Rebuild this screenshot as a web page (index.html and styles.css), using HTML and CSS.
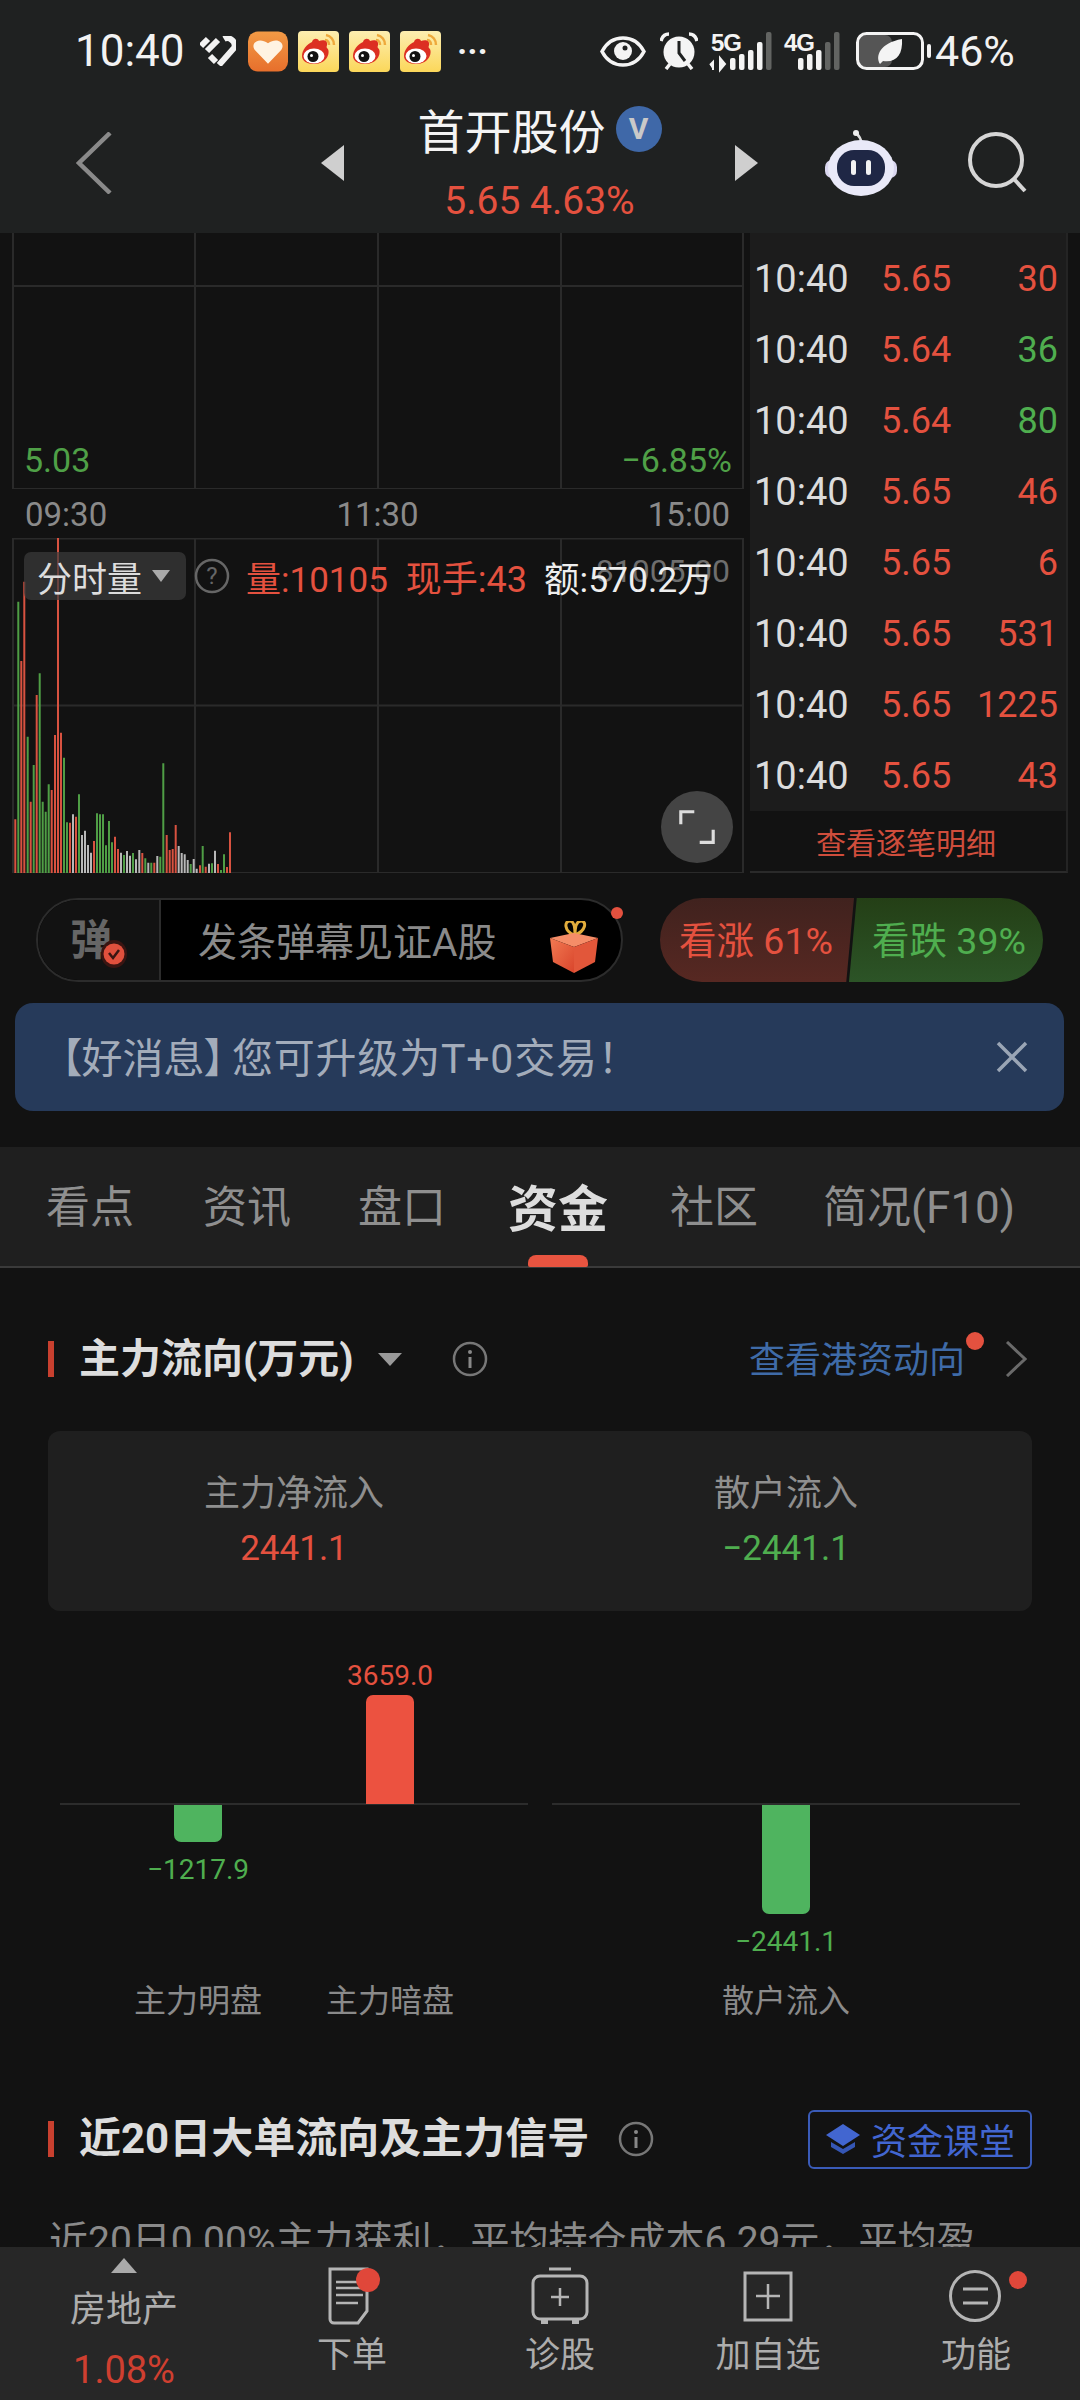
FILE: index.html
```html
<!DOCTYPE html>
<html lang="zh-CN">
<head>
    <meta charset="UTF-8">
    <meta name="viewport" content="width=device-width, initial-scale=1.0">
    <title>首开股份</title>
    <link rel="stylesheet" href="styles.css">
</head>
<body>
    <svg class="defs">
        <defs>
            <linearGradient id="wbBg" x1="0" y1="0" x2="0" y2="1"><stop offset="0" stop-color="#fdeeb0"/><stop offset="1" stop-color="#fbd75a"/></linearGradient>
            <linearGradient id="heartBg" x1="0" y1="0" x2="0" y2="1"><stop offset="0" stop-color="#f29a45"/><stop offset="1" stop-color="#e76f2c"/></linearGradient>
            <linearGradient id="giftBg" x1="0" y1="0" x2="1" y2="1"><stop offset="0" stop-color="#f27a52"/><stop offset="1" stop-color="#d9452c"/></linearGradient>
            <symbol id="weibo" viewBox="0 0 41 41">
                <rect width="41" height="41" rx="4" fill="url(#wbBg)"/>
                <path d="M28 4c5 1 8 5 8 10M27 9c3 0 4 3 4 5" fill="none" stroke="#eea93c" stroke-width="2.500"/>
                <path d="M4 25c0-6 5-12 10-14 1-4 6-4 7-1 5-2 9 0 8 4 0 1-1 2 0 3 4 3 1 16-13 16C9 33 4 30 4 25z" fill="#dc2f22"/>
                <ellipse cx="16" cy="25" rx="10.500" ry="7.500" fill="#fff"/>
                <circle cx="15" cy="25.500" r="5.500" fill="#111"/>
                <circle cx="13.500" cy="24.500" r="1.500" fill="#fff"/>
            </symbol>
            <symbol id="info" viewBox="0 0 36 36">
                <circle cx="18" cy="18" r="16" fill="none" stroke="#777" stroke-width="2.500"/>
                <circle cx="18" cy="11" r="2" fill="#888"/>
                <path d="M18 16v11" stroke="#888" stroke-width="3"/>
            </symbol>
        </defs>
    </svg>

    <div class="top">
        <div class="status">
            <span class="clock">10:40</span>
            <svg class="st-logo" viewBox="0 0 36 30"><path d="M1 10l7-7M7 15L18 4M24 3c5-3 13 3 10 9L19 29M16 26l-6-6" fill="none" stroke="#f2f2f2" stroke-width="6" stroke-linejoin="round"/></svg>
            <svg class="st-app" viewBox="0 0 41 41"><rect width="41" height="41" rx="10" fill="url(#heartBg)"/><path d="M20.500 33L7 19c-5-7 4-14 13.500-7C30 5 39 12 34 19z" fill="#fff3e2"/></svg>
            <svg class="st-wb"><use href="#weibo"/></svg>
            <svg class="st-wb"><use href="#weibo"/></svg>
            <svg class="st-wb"><use href="#weibo"/></svg>
            <span class="st-dots">···</span>
            <span class="st-space"></span>
            <svg class="st-eye" viewBox="0 0 46 31"><path d="M2 15.500C7 6 15 2 23 2s16 4 21 13.500C39 25 31 29 23 29S7 25 2 15.500z" fill="none" stroke="#f4f4f4" stroke-width="3.500"/><circle cx="23" cy="15" r="9" fill="#f4f4f4"/><circle cx="25" cy="12" r="2.500" fill="#1f2121"/></svg>
            <svg class="st-alarm" viewBox="0 0 38 38"><circle cx="19" cy="20" r="15.500" fill="#f4f4f4"/><path d="M19 9v12l6 8" fill="none" stroke="#1f2121" stroke-width="3"/><path d="M1 9c1-4 4-7 8-7M37 9c-1-4-4-7-8-7" fill="none" stroke="#f4f4f4" stroke-width="3.500"/><path d="M6 37l4-5M32 37l-4-5" stroke="#f4f4f4" stroke-width="3.500"/></svg>
            <svg class="st-net" viewBox="705 28 140 46">
                <text x="711" y="51" class="net-txt">5G</text>
                <text x="784" y="51" class="net-txt">4G</text>
                <path d="M713 70v-8l-3 3M720 58v12l5-6z" fill="#f4f4f4" stroke="#f4f4f4" stroke-width="2"/>
                <g fill="#f4f4f4">
                    <rect x="730" y="58" width="5.500" height="12" rx="2"/>
                    <rect x="739" y="54" width="5.500" height="16" rx="2"/>
                    <rect x="748" y="50" width="5.500" height="20" rx="2"/>
                    <rect x="757" y="42" width="5.500" height="28" rx="2"/>
                    <rect x="798" y="58" width="5.500" height="12" rx="2"/>
                    <rect x="807" y="54" width="5.500" height="16" rx="2"/>
                    <rect x="816" y="50" width="5.500" height="20" rx="2"/>
                </g>
                <g fill="#626462">
                    <rect x="766" y="32" width="5.500" height="38" rx="2"/>
                    <rect x="825" y="42" width="5.500" height="28" rx="2"/>
                    <rect x="834" y="32" width="5.500" height="38" rx="2"/>
                </g>
            </svg>
            <svg class="st-batt" viewBox="0 0 76 38"><rect x="3" y="3" width="33" height="32" rx="7" fill="#555"/><rect x="1.500" y="1.500" width="65" height="35" rx="9" fill="none" stroke="#f4f4f4" stroke-width="3"/><path d="M24 32c-5-8 0-21 22-25 1 16-6 24-19 22l-3 3z" fill="#f4f4f4"/><rect x="71" y="12" width="4" height="14" rx="2" fill="#f4f4f4"/></svg>
            <span class="st-pct">46%</span>
        </div>
        <div class="nav">
            <svg class="back" viewBox="0 0 36 62"><path d="M34 1L3 31l31 30" fill="none" stroke="#8a8a8a" stroke-width="4.500"/></svg>
            <span class="tri-left"></span>
            <div class="title-block">
                <div class="title-row"><span class="title">首开股份</span><span class="v-badge">V</span></div>
                <div class="sub">5.65 4.63%</div>
            </div>
            <span class="tri-right"></span>
            <svg class="robot" viewBox="0 0 72 66">
                <path d="M36 12c0-4-2-6-4-8" fill="none" stroke="#ddd" stroke-width="2.500"/>
                <circle cx="31" cy="3" r="3" fill="#eee"/>
                <rect x="0" y="30" width="72" height="18" rx="7" fill="#d9d6ef"/>
                <ellipse cx="36" cy="38" rx="33" ry="28" fill="#e9e9f8"/>
                <rect x="12" y="20" width="48" height="36" rx="17" fill="#1f2745"/>
                <rect x="26" y="30" width="5" height="15" rx="2.500" fill="#f2f2f2"/>
                <rect x="41" y="30" width="5" height="15" rx="2.500" fill="#f2f2f2"/>
            </svg>
            <svg class="search" viewBox="0 0 62 62"><circle cx="29" cy="28" r="26" fill="none" stroke="#d6d6d6" stroke-width="4"/><path d="M46 46l12 13" stroke="#d6d6d6" stroke-width="4"/></svg>
        </div>
    </div>

    <div class="market">
        <div class="chart">
            <div class="pane pane-price">
                <svg class="grid" viewBox="0 233 750 256"><path d="M13 233V489H743V233M195 233V489M378 233V489M561 233V489M13 286H743"/></svg>
                <div class="price-labels"><span>5.03</span><span>−6.85%</span></div>
            </div>
            <div class="time-axis"><span>09:30</span><span>11:30</span><span>15:00</span></div>
            <div class="pane pane-vol">
                <svg class="grid" viewBox="0 538 750 335">
                    <path d="M13 873V538.500H743V873H13M195 538V873M378 538V873M561 538V873M13 705.500H743"/>
                    <path class="v-red" d="M15.300 873V819.300M21.300 873V661M24.300 873V581.700M30.700 873V801.700M36.700 873V695M51.700 873V790M55 873V735M58 873V538M61 873V732.700M70 873V822.700M76 873V816.700M94 873V841M115 873V836.700M118 873V849M142.300 873V853M154.300 873V862.700M166.700 873V835M169.700 873V850M172.700 873V849M175.700 873V825M200 873V865.300M205.700 873V866.700M218 873V864M227 873V867M230 873V832.300"/>
                    <path class="v-green" d="M18.300 873V601.700M27.700 873V736.700M33.700 873V765M39.700 873V673.300M42.700 873V801.700M45.700 873V811.700M48.700 873V784.300M64 873V757.700M67 873V822.300M79 873V794.300M97 873V813.300M100 873V814.300M103 873V814.300M106 873V845.300M109 873V821M112 873V842.300M124 873V855M133 873V853M145.300 873V858.300M151.300 873V862.700M160.300 873V856.700M163.300 873V763.300M190.700 873V864M202.700 873V846M212 873V863.300M221 873V870M224 873V854.300"/>
                    <path class="v-gray" d="M73 873V814.300M82 873V835M85 873V830.700M88 873V845M91 873V852.700M121 873V852.700M127 873V851M130 873V855.700M136 873V859.300M139.300 873V850M148.300 873V862.700M157.300 873V856M178.700 873V846M181.700 873V853M184.700 873V854.300M187.700 873V860M193.700 873V859M196.700 873V868.700M209 873V863.700M215 873V850.700"/>
                </svg>
                <span class="vol-max">81005.00</span>
                <div class="vol-legend">
                    <span class="vol-pill">分时量<i class="caret"></i></span>
                    <svg class="help" viewBox="0 0 36 36"><circle cx="18" cy="18" r="16" fill="none" stroke="#666" stroke-width="2.500"/><text x="18" y="26" text-anchor="middle" class="help-q">?</text></svg>
                    <span class="red vol-a">量:10105</span>
                    <span class="red vol-b">现手:43</span>
                    <span class="vol-c">额:570.2万</span>
                </div>
                <div class="expand">
                    <svg viewBox="0 0 40 40"><path d="M2 17V3h15M38 23v14H23" fill="none" stroke="#ddd" stroke-width="3.500"/></svg>
                </div>
            </div>
        </div>
        <div class="ticks">
            <div class="tick-list">
                <div class="tick"><span>10:40</span><span class="red">5.65</span><span class="red">30</span></div>
                <div class="tick"><span>10:40</span><span class="red">5.64</span><span class="green">36</span></div>
                <div class="tick"><span>10:40</span><span class="red">5.64</span><span class="green">80</span></div>
                <div class="tick"><span>10:40</span><span class="red">5.65</span><span class="red">46</span></div>
                <div class="tick"><span>10:40</span><span class="red">5.65</span><span class="red">6</span></div>
                <div class="tick"><span>10:40</span><span class="red">5.65</span><span class="red">531</span></div>
                <div class="tick"><span>10:40</span><span class="red">5.65</span><span class="red">1225</span></div>
                <div class="tick"><span>10:40</span><span class="red">5.65</span><span class="red">43</span></div>
            </div>
            <div class="tick-more">查看逐笔明细</div>
        </div>
    </div>

    <div class="action-row">
        <div class="danmu">
            <div class="danmu-tag">
                <span class="danmu-char">弹</span>
                <svg class="danmu-check" viewBox="0 0 26 28"><ellipse cx="13" cy="14" rx="13" ry="14" fill="#3a1512"/><circle cx="13" cy="14" r="10.500" fill="#e0503d"/><path d="M8 13l4 5 6-8" fill="none" stroke="#3a1512" stroke-width="2.500"/></svg>
            </div>
            <div class="danmu-input">
                <span class="danmu-text">发条弹幕见证A股</span>
                <svg class="gift" viewBox="0 0 50 52">
                    <path d="M24 14C14 10 14 0 20 0c4 0 5 8 5 14 0-6 1-14 6-14 6 0 5 10-6 14z" fill="none" stroke="#e2ad3c" stroke-width="3"/>
                    <path d="M0 17l24-5 24 5-24 9z" fill="#f58d68"/>
                    <path d="M0 17l24 9v26L3 41z" fill="url(#giftBg)"/>
                    <path d="M48 17l-24 9v26l21-11z" fill="#e2573a"/>
                </svg>
            </div>
            <i class="danmu-dot"></i>
        </div>
        <div class="vote">
            <div class="vote-up">看涨 61%</div>
            <div class="vote-down">看跌 39%</div>
        </div>
    </div>

    <div class="notice">
        <span><span class="notice-tag">【好消息】</span>您可升级为T+0交易！</span>
        <svg class="notice-close" viewBox="0 0 32 32"><path d="M2 2l28 28M30 2L2 30" stroke="#9aa5b5" stroke-width="3.500"/></svg>
    </div>

    <div class="tabs">
        <span class="tab tab-1">看点</span>
        <span class="tab tab-2">资讯</span>
        <span class="tab tab-3">盘口</span>
        <span class="tab tab-4 active">资金</span>
        <span class="tab tab-5">社区</span>
        <span class="tab tab-6">简况(F10)</span>
    </div>

    <div class="content">
        <div class="sec-head">
            <span class="sec-title">主力流向(万元)</span>
            <i class="sec-caret"></i>
            <svg class="sec-info"><use href="#info"/></svg>
            <span class="sec-link">查看港资动向<i class="link-dot"></i></span>
            <svg class="sec-arrow" viewBox="0 0 22 36"><path d="M2 1l18 17L2 35" fill="none" stroke="#6a6a6a" stroke-width="3"/></svg>
        </div>

        <div class="summary">
            <div class="summary-col">
                <div class="summary-label">主力净流入</div>
                <div class="summary-num red">2441.1</div>
            </div>
            <div class="summary-col">
                <div class="summary-label">散户流入</div>
                <div class="summary-num green">−2441.1</div>
            </div>
        </div>

        <div class="flow">
            <div class="flow-group flow-group-a">
                <div class="flow-col">
                    <div class="flow-up"></div>
                    <div class="flow-down">
                        <div class="bar bar-green" style="height:37px"></div>
                        <div class="bar-val green">−1217.9</div>
                    </div>
                    <div class="flow-name">主力明盘</div>
                </div>
                <div class="flow-col">
                    <div class="flow-up">
                        <div class="bar-val red">3659.0</div>
                        <div class="bar bar-red" style="height:109px"></div>
                    </div>
                    <div class="flow-down"></div>
                    <div class="flow-name">主力暗盘</div>
                </div>
            </div>
            <div class="flow-group flow-group-b">
                <div class="flow-col">
                    <div class="flow-up"></div>
                    <div class="flow-down">
                        <div class="bar bar-green" style="height:109px"></div>
                        <div class="bar-val green">−2441.1</div>
                    </div>
                    <div class="flow-name">散户流入</div>
                </div>
            </div>
        </div>

        <div class="sec-head sec-head-2">
            <span class="sec-title sec-title-2">近20日大单流向及主力信号</span>
            <svg class="sec-info sec-info-2"><use href="#info"/></svg>
            <span class="course">
                <svg viewBox="0 0 34 30"><path d="M17 0l17 11-17 11L0 11z" fill="#4266d0"/><path d="M5 18l12 7 12-7v5L17 30 5 23z" fill="#3556b4"/></svg>
                资金课堂
            </span>
        </div>
        <p class="sec-text">近20日0.00%主力获利，平均持仓成本6.29元，平均盈</p>
    </div>

    <div class="bottom">
        <div class="bt-item bt-sector">
            <i class="bt-tri"></i>
            <span class="bt-name">房地产</span>
            <span class="bt-pct">1.08%</span>
        </div>
        <div class="bt-item">
            <span class="bt-icon">
                <svg viewBox="0 0 70 60"><path d="M13 3h37v42l-9 12H17a4 4 0 0 1-4-4z" fill="none" stroke="#b5b5b5" stroke-width="3"/><path d="M19 16h24M19 22h27M19 29h27M19 37h22" stroke="#b5b5b5" stroke-width="2.500"/><circle cx="51" cy="14" r="12" fill="#e0473a"/></svg>
            </span>
            <span>下单</span>
        </div>
        <div class="bt-item">
            <span class="bt-icon">
                <svg viewBox="0 0 70 60"><path d="M24 3h22" stroke="#b5b5b5" stroke-width="3"/><rect x="8" y="10" width="54" height="43" rx="7" fill="none" stroke="#b5b5b5" stroke-width="3"/><path d="M35 22v18M26 31h18" stroke="#b5b5b5" stroke-width="2.500"/><path d="M16 54v4h7v-4M47 54v4h7v-4" fill="#b5b5b5"/></svg>
            </span>
            <span>诊股</span>
        </div>
        <div class="bt-item">
            <span class="bt-icon">
                <svg viewBox="0 0 70 60"><rect x="12" y="7" width="46" height="47" fill="none" stroke="#b5b5b5" stroke-width="3"/><path d="M35 18v25M23 30h24" stroke="#b5b5b5" stroke-width="2.500"/></svg>
            </span>
            <span>加自选</span>
        </div>
        <div class="bt-item">
            <span class="bt-icon">
                <svg viewBox="0 0 70 60"><circle cx="34" cy="30" r="24.500" fill="none" stroke="#b5b5b5" stroke-width="3"/><path d="M22 23h25M22 37h25" stroke="#b5b5b5" stroke-width="3"/></svg>
            </span>
            <span>功能</span>
            <i class="bt-dot"></i>
        </div>
    </div>
</body>
</html>
```

FILE: styles.css
```css
* {
    box-sizing: border-box;
}
body {
    margin: 0;
    width: 1080px;
    height: 2400px;
    overflow: hidden;
    position: relative;
    background-color: #121212;
    color: #ddd;
    font-family: Roboto, "Noto Sans CJK SC", sans-serif;
}
.defs {
    position: absolute;
    width: 0;
    height: 0;
}
.red {
    color: #e4513f;
}
.green {
    color: #4fae4f;
}

/* status bar + stock header */
.top {
    height: 233px;
    background-color: #1f2121;
}
.status {
    height: 80px;
    padding: 22px 0 0 75px;
    display: flex;
    align-items: center;
}
.clock {
    font-size: 44px;
    color: #f2f2f2;
    width: 109px;
}
.st-logo {
    width: 36px;
    height: 30px;
    margin-left: 16px;
}
.st-app {
    width: 40px;
    height: 41px;
    margin-left: 12px;
}
.st-wb {
    width: 41px;
    height: 41px;
    margin-left: 10px;
}
.st-dots {
    font-size: 34px;
    font-weight: 700;
    color: #f2f2f2;
    width: 30px;
    margin-left: 16px;
}
.st-space {
    width: 113px;
}
.st-eye {
    width: 46px;
    height: 31px;
}
.st-alarm {
    width: 38px;
    height: 38px;
    margin-left: 14px;
}
.st-net {
    width: 140px;
    height: 46px;
    margin-left: 7px;
}
.net-txt {
    font-size: 24px;
    font-weight: 700;
    fill: #f4f4f4;
    font-family: "Liberation Sans", sans-serif;
    letter-spacing: -1px;
}
.st-batt {
    width: 76px;
    height: 38px;
    margin-left: 11px;
}
.st-pct {
    font-size: 43px;
    color: #f2f2f2;
    margin-left: 3px;
}
.nav {
    height: 153px;
    padding: 12px 0 0 76px;
    display: flex;
    align-items: center;
}
.back {
    width: 36px;
    height: 62px;
}
.tri-left {
    margin-left: 209px;
    border-right: 23px solid #cfcfcf;
    border-top: 18px solid transparent;
    border-bottom: 18px solid transparent;
}
.title-block {
    width: 391px;
    text-align: center;
}
.title-row {
    display: flex;
    justify-content: center;
    align-items: center;
    height: 48px;
    gap: 10px;
}
.title {
    font-size: 47px;
    color: #f4f4f4;
}
.v-badge {
    width: 46px;
    height: 46px;
    border-radius: 50%;
    background-color: #3f68a8;
    color: #c9c9c9;
    font-size: 30px;
    font-weight: 700;
    line-height: 46px;
}
.sub {
    margin-top: 28px;
    font-size: 39px;
    font-weight: 450;
    line-height: 40px;
    color: #e4513f;
}
.tri-right {
    border-left: 23px solid #cfcfcf;
    border-top: 18px solid transparent;
    border-bottom: 18px solid transparent;
}
.robot {
    width: 72px;
    height: 66px;
    margin-left: 67px;
}
.search {
    width: 62px;
    height: 62px;
    margin-left: 70px;
}

/* chart + tick list */
.market {
    display: flex;
    height: 640px;
}
.chart {
    width: 750px;
    display: flex;
    flex-direction: column;
}
.pane {
    position: relative;
}
.grid {
    position: absolute;
    inset: 0;
    width: 100%;
    height: 100%;
}
.grid path {
    fill: none;
    stroke: #2a2a2a;
    stroke-width: 2;
}
.grid .v-red {
    stroke: #d85240;
}
.grid .v-green {
    stroke: #4f9e45;
}
.grid .v-gray {
    stroke: #b8b8b8;
}
.pane-price {
    height: 256px;
}
.price-labels {
    position: absolute;
    left: 24px;
    right: 18px;
    bottom: 9px;
    display: flex;
    justify-content: space-between;
    font-size: 34px;
    line-height: 40px;
    color: #4fa047;
}
.time-axis {
    height: 49px;
    padding: 2px 20px 0 25px;
    display: flex;
    justify-content: space-between;
    align-items: center;
    font-size: 33px;
    color: #8a8a8a;
}
.pane-vol {
    height: 335px;
}
.vol-max {
    position: absolute;
    right: 20px;
    top: 14px;
    font-size: 32px;
    color: #6e6e6e;
}
.vol-legend {
    position: absolute;
    left: 24px;
    top: 12px;
    display: flex;
    align-items: center;
    white-space: nowrap;
    font-size: 36px;
}
.vol-pill {
    width: 162px;
    height: 48px;
    padding-left: 13px;
    display: flex;
    align-items: center;
    background-color: rgba(60, 60, 60, 0.7);
    border-radius: 7px;
    font-size: 35px;
    color: #ddd;
}
.caret {
    margin: 0 0 0 10px;
    border-top: 12px solid #aaa;
    border-left: 9px solid transparent;
    border-right: 9px solid transparent;
}
.help {
    width: 36px;
    height: 36px;
    margin-left: 8px;
}
.help-q {
    font-size: 24px;
    fill: #666;
}
.vol-a {
    margin-left: 16px;
    font-size: 35px;
}
.vol-b {
    margin-left: 18px;
}
.vol-c {
    margin-left: 17px;
    font-size: 35.500px;
    color: #eee;
}
.expand {
    position: absolute;
    right: 17px;
    bottom: 10px;
    width: 72px;
    height: 72px;
    border-radius: 50%;
    background-color: #444;
    display: flex;
    align-items: center;
    justify-content: center;
}
.expand svg {
    width: 36px;
    height: 36px;
}
.ticks {
    width: 318px;
    border-right: 2px solid #242424;
    border-bottom: 2px solid #2a2a2a;
}
.tick-list {
    height: 578px;
    padding-top: 10px;
    background-color: #1c1c1c;
}
.tick {
    height: 71px;
    padding: 0 8px 0 4px;
    display: grid;
    grid-template-columns: 127px 70px 1fr;
    align-items: center;
    font-size: 36px;
    font-weight: 450;
    color: #dcdcdc;
}
.tick span:first-child {
    font-size: 38px;
    font-weight: 400;
}
.tick span:last-child {
    text-align: right;
}
.tick-more {
    height: 60px;
    padding-right: 4px;
    display: flex;
    align-items: center;
    justify-content: center;
    font-size: 30px;
    color: #cf4d3c;
}

/* danmu + vote */
.action-row {
    height: 84px;
    margin-top: 25px;
    padding-left: 36px;
    display: flex;
}
.danmu {
    width: 587px;
    height: 84px;
    position: relative;
    display: flex;
    border: 2px solid #2c2c2c;
    border-radius: 42px;
    background-color: #000;
}
.danmu-tag {
    width: 123px;
    position: relative;
    border-right: 2px solid #2c2c2c;
    border-radius: 42px 0 0 42px;
    background-color: #121212;
}
.danmu-char {
    position: absolute;
    left: 32px;
    top: 6px;
    font-size: 42px;
    font-weight: 700;
    color: #666;
}
.danmu-check {
    position: absolute;
    left: 63px;
    top: 40px;
    width: 26px;
    height: 28px;
}
.danmu-input {
    flex: 1;
    padding-left: 37px;
    display: flex;
    align-items: center;
    font-size: 39px;
    color: #8a8a8a;
    white-space: nowrap;
}
.danmu-text {
    margin-bottom: 3px;
}
.gift {
    width: 50px;
    height: 52px;
    margin: 14px 0 0 54px;
}
.danmu-dot {
    position: absolute;
    right: -2px;
    top: 7px;
    width: 12px;
    height: 12px;
    border-radius: 50%;
    background-color: #e4513f;
}
.vote {
    margin-left: 37px;
    display: flex;
    font-size: 37.500px;
}
.vote-up,
.vote-down {
    width: 194px;
    height: 84px;
    padding-bottom: 6px;
    display: flex;
    align-items: center;
    white-space: nowrap;
}
.vote-up {
    padding-left: 19px;
    color: #e4513f;
    border-radius: 42px 0 0 42px;
    background: linear-gradient(#40221e, #572822);
    clip-path: polygon(0 0, 100% 0, 96% 100%, 0 100%);
}
.vote-down {
    margin-left: -5px;
    padding-left: 23px;
    color: #4fae4f;
    border-radius: 0 42px 42px 0;
    background: linear-gradient(#243f16, #2c5427);
    clip-path: polygon(4% 0, 100% 0, 100% 100%, 0 100%);
}
.notice {
    height: 108px;
    margin: 21px 16px 0 15px;
    padding: 0 36px 4px 46px;
    display: flex;
    align-items: center;
    justify-content: space-between;
    border-radius: 18px;
    background-color: #263a5a;
    font-size: 41px;
    letter-spacing: 0.800px;
    color: #a3acba;
}
.notice-tag {
    font-feature-settings: "palt";
    letter-spacing: 0;
    margin-right: 7px;
}
.notice-close {
    width: 32px;
    height: 32px;
    margin-top: 4px;
}

/* tabs */
.tabs {
    height: 121px;
    margin-top: 36px;
    display: flex;
    position: relative;
    background-color: #1f1f1f;
    border-bottom: 2px solid #3a3a3a;
    font-size: 44px;
    color: #8f8f8f;
}
.tab {
    position: absolute;
    top: 25px;
    white-space: nowrap;
}
.tab-1 { left: 46px; }
.tab-2 { left: 203px; }
.tab-3 { left: 358px; }
.tab-4 { left: 508px; }
.tab-5 { left: 670px; }
.tab-6 { left: 823px; }
.tab.active {
    top: 22px;
    font-size: 50px;
    font-weight: 700;
    color: #ddd;
}
.tab.active::after {
    content: "";
    position: absolute;
    left: 20px;
    top: 86px;
    width: 60px;
    height: 12px;
    border-radius: 8px 8px 2px 2px;
    background-color: #e85440;
}

/* fund flow */
.content {
    padding: 0 48px;
}
.sec-head {
    height: 60px;
    margin-top: 61px;
    display: flex;
    align-items: center;
    position: relative;
}
.sec-head::before {
    content: "";
    width: 6px;
    height: 36px;
    margin-right: 25px;
    background-color: #c8402f;
}
.sec-title {
    font-size: 41px;
    font-weight: 700;
    color: #ddd;
    white-space: nowrap;
    margin-bottom: 9px;
}
.sec-title-2 {
    font-size: 42px;
}
.sec-caret {
    margin: 0 0 0 24px;
    border-top: 13px solid #999;
    border-left: 12px solid transparent;
    border-right: 12px solid transparent;
}
.sec-info {
    width: 36px;
    height: 36px;
    margin-left: 50px;
}
.sec-link {
    margin-left: auto;
    position: relative;
    font-size: 36px;
    color: #3f6ba8;
    margin-bottom: 4px;
}
.link-dot {
    position: absolute;
    right: -19px;
    top: 1px;
    width: 18px;
    height: 18px;
    border-radius: 50%;
    background-color: #e4513f;
}
.sec-arrow {
    width: 22px;
    height: 36px;
    margin-left: 40px;
    margin-right: 5px;
}
.summary {
    height: 180px;
    margin-top: 42px;
    display: grid;
    grid-template-columns: 1fr 1fr;
    border-radius: 12px;
    background-color: #1f1f1f;
    text-align: center;
}
.summary-label {
    margin-top: 40px;
    font-size: 36px;
    line-height: 46px;
    color: #8f8f8f;
}
.summary-num {
    margin-top: 9px;
    font-size: 35px;
    line-height: 46px;
}
.flow {
    height: 402px;
    margin-top: 46px;
    display: flex;
}
.flow-group {
    display: flex;
    position: relative;
    width: 468px;
}
.flow-group::before {
    content: "";
    position: absolute;
    left: 0;
    right: 0;
    top: 146px;
    height: 2px;
    background-color: #2c2c2c;
}
.flow-group-a {
    margin-left: 12px;
    padding: 0 42px;
}
.flow-group-b {
    margin-left: 24px;
}
.flow-col {
    flex: 1;
    position: relative;
    display: flex;
    flex-direction: column;
    align-items: center;
}
.flow-up {
    height: 147px;
    display: flex;
    flex-direction: column;
    justify-content: flex-end;
    align-items: center;
    width: 100%;
}
.flow-down {
    height: 175px;
    display: flex;
    flex-direction: column;
    align-items: center;
    width: 100%;
    padding-top: 1px;
}
.bar {
    width: 48px;
    flex-shrink: 0;
}
.bar-red {
    background-color: #ec5240;
    border-radius: 7px 7px 0 0;
}
.bar-green {
    background-color: #4fb45f;
    border-radius: 0 0 7px 7px;
}
.bar-val {
    font-size: 28px;
    line-height: 36px;
    margin-top: 10px;
}
.flow-up .bar-val {
    margin: 0 0 1px;
}
.flow-name {
    font-size: 32px;
    line-height: 44px;
    color: #8a8a8a;
}
.sec-head-2 {
    margin-top: 50px;
}
.sec-info-2 {
    margin-left: 29px;
}
.course {
    margin-left: auto;
    width: 224px;
    height: 59px;
    padding-left: 16px;
    display: flex;
    align-items: center;
    gap: 11px;
    border: 2px solid #3a5bb8;
    border-radius: 6px;
    font-size: 36px;
    color: #4266d0;
    white-space: nowrap;
}
.course svg {
    width: 34px;
    height: 30px;
}
.sec-text {
    margin: 46px 0 0 1px;
    font-size: 39px;
    line-height: 52px;
    color: #8a8a8a;
    white-space: nowrap;
}

/* bottom bar */
.bottom {
    position: absolute;
    left: 0;
    bottom: 0;
    width: 1080px;
    height: 153px;
    display: grid;
    grid-template-columns: 248px repeat(4, 208px);
    background-color: #272727;
    font-size: 35px;
    color: #adadad;
}
.bt-item {
    position: relative;
    display: flex;
    flex-direction: column;
    align-items: center;
    padding-top: 19px;
}
.bt-icon {
    height: 60px;
    width: 70px;
}
.bt-icon svg {
    width: 70px;
    height: 60px;
}
.bt-sector {
    padding-top: 11px;
}
.bt-tri {
    border-bottom: 15px solid #aaa;
    border-left: 13px solid transparent;
    border-right: 13px solid transparent;
}
.bt-name {
    font-size: 36px;
    line-height: 46px;
    margin-top: 14px;
}
.bt-pct {
    font-size: 38px;
    line-height: 46px;
    margin-top: 14px;
    color: #cf3f30;
}
.bt-dot {
    position: absolute;
    left: 137px;
    top: 24px;
    width: 18px;
    height: 18px;
    border-radius: 50%;
    background-color: #e0473a;
}
```
